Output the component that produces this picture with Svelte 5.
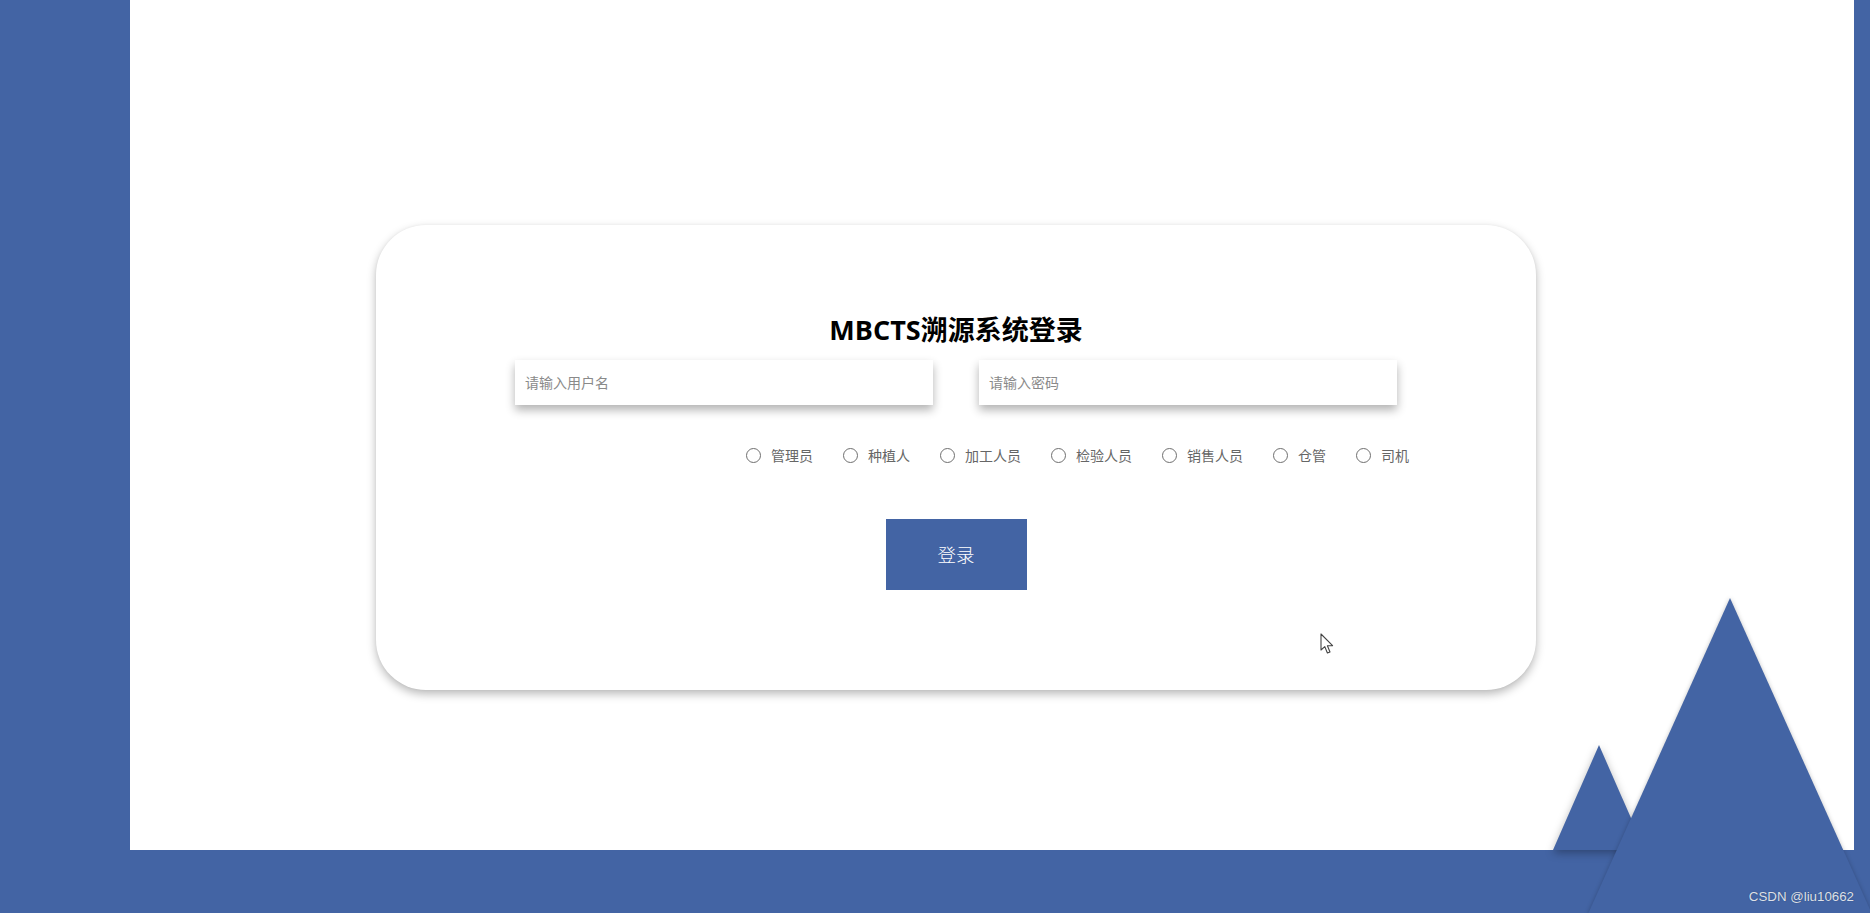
<script>
  const roles = ['管理员', '种植人', '加工人员', '检验人员', '销售人员', '仓管', '司机'];
  let role = $state('');
</script>

<div class="page">
  <div class="sheet">
    <form class="card" onsubmit={(e) => e.preventDefault()}>
      <h1 class="title">MBCTS溯源系统登录</h1>
      <div class="fields">
        <input class="field" type="text" placeholder="请输入用户名" />
        <input class="field" type="password" placeholder="请输入密码" />
      </div>
      <div class="roles">
        {#each roles as name}
          <label class="role">
            <input type="radio" name="role" value={name} bind:group={role} />
            <span>{name}</span>
          </label>
        {/each}
      </div>
      <button class="submit" type="submit">登录</button>
    </form>
  </div>

  <div class="peak peak-small"></div>
  <div class="peak peak-big"></div>

  <svg class="cursor" width="14" height="22" viewBox="0 0 14 22">
    <path d="M1 1 L1 17 L4.8 13.6 L7.4 20 L10 19 L7.4 12.8 L12.6 12.6 Z" fill="#fff" stroke="#444" stroke-width="1.1" stroke-linejoin="round" />
  </svg>
  <div class="mark">CSDN @liu10662</div>
</div>

<style>
  :global(body) {
    margin: 0;
    overflow: hidden;
  }

  .page {
    position: relative;
    box-sizing: border-box;
    height: 913px;
    padding: 0 16px 63px 130px;
    background: #4364a4;
    overflow: hidden;
    font-family: "Open Sans", "Noto Sans CJK SC", sans-serif;
  }

  .sheet {
    box-sizing: border-box;
    height: 100%;
    padding: 225px 0 0 246px;
    background: #fff;
  }

  .card {
    box-sizing: border-box;
    display: flex;
    flex-direction: column;
    align-items: center;
    width: 1160px;
    height: 465px;
    padding-top: 90px;
    background: #fff;
    border-radius: 50px;
    box-shadow: 0 4px 10px rgba(0, 0, 0, 0.28), 0 0 3px rgba(0, 0, 0, 0.04);
  }

  .title {
    margin: 0 0 15px;
    font-size: 27px;
    font-weight: 700;
    line-height: 30px;
    color: #000;
  }

  .fields {
    display: flex;
    justify-content: space-between;
    box-sizing: border-box;
    width: 100%;
    padding: 0 139px;
  }

  .field {
    box-sizing: border-box;
    width: 418px;
    height: 44.5px;
    padding: 0 10px;
    border: 0;
    outline: 0;
    background: #fff;
    box-shadow: 0 5px 9px rgba(0, 0, 0, 0.3);
    font: 14px "Noto Sans CJK SC", sans-serif;
  }

  .field::placeholder {
    color: #8a8a8a;
  }

  .roles {
    display: flex;
    justify-content: flex-end;
    gap: 30px;
    box-sizing: border-box;
    width: 100%;
    height: 20px;
    margin-top: 40.5px;
    padding-right: 127px;
  }

  .role {
    display: flex;
    align-items: center;
    gap: 10px;
    font: 14px/20px "Noto Sans CJK SC", sans-serif;
    color: #666;
  }

  .role input {
    appearance: none;
    box-sizing: border-box;
    width: 15px;
    height: 15px;
    margin: 0;
    border: 1.3px solid #6f6f6f;
    border-radius: 50%;
    background: #fff;
  }

  .role input:checked {
    background: #4364a4;
    box-shadow: inset 0 0 0 2px #fff;
  }

  .submit {
    width: 141px;
    height: 70.5px;
    margin-top: 54px;
    border: 0;
    background: #4364a4;
    color: #fff;
    font: 300 18.5px "Noto Sans CJK SC", sans-serif;
    cursor: pointer;
  }

  .peak {
    position: absolute;
    width: 0;
    height: 0;
    border-style: solid;
    border-color: transparent transparent #4364a4 transparent;
    filter: drop-shadow(0 3px 4px rgba(0, 0, 0, 0.3));
  }

  .peak-small {
    left: 1553px;
    top: 745px;
    border-width: 0 46px 105px 46px;
  }

  .peak-big {
    left: 1588px;
    top: 598px;
    border-width: 0 142px 316px 142px;
    filter: drop-shadow(0 0 2px rgba(0, 0, 0, 0.22));
  }

  .cursor {
    position: absolute;
    left: 1320px;
    top: 633px;
  }

  .mark {
    position: absolute;
    right: 16px;
    top: 889px;
    font: 13.3px/16px "Liberation Sans", sans-serif;
    color: #dde1ea;
    text-shadow: 0 0 1px rgba(30, 40, 70, 0.6);
  }
</style>
